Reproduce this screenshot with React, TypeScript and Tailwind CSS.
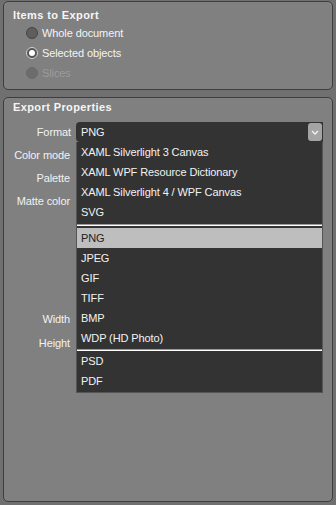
import React from "react";

const font = { fontFamily: '"Liberation Sans", Arial, sans-serif' };

const Radio = ({
  label,
  checked,
  disabled
}: {
  label: string;
  checked?: boolean;
  disabled?: boolean;
}) => (
  <div className="flex h-5 items-center pl-[22px]">
    <span
      className={
        "flex size-3 items-center justify-center rounded-full border " +
        (checked
          ? "border-[#d0d0d0] bg-[#555]"
          : disabled
            ? "border-[#6a6a6a] bg-[#6c6c6c]"
            : "border-[#444] bg-[#5e5e5e]")
      }
    >
      {checked && <span className="size-[6px] rounded-full bg-white" />}
    </span>
    <span
      className={
        "ml-1 text-[11px] tracking-[-0.1px] " +
        (disabled ? "text-[#9c9c9c]" : "text-[#f4f4f4]")
      }
    >
      {label}
    </span>
  </div>
);

const Label = ({ text, className }: { text: string; className?: string }) => (
  <div
    className={
      "flex h-5 w-[67px] items-center justify-end text-[11px] tracking-[-0.1px] text-[#f2f2f2] " +
      (className ?? "")
    }
  >
    {text}
  </div>
);

const groupA = [
  "XAML Silverlight 3 Canvas",
  "XAML WPF Resource Dictionary",
  "XAML Silverlight 4 / WPF Canvas",
  "SVG"
];
const groupB = ["PNG", "JPEG", "GIF", "TIFF", "BMP", "WDP (HD Photo)"];
const groupC = ["PSD", "PDF"];

const Item = ({ text }: { text: string }) => (
  <div
    className={
      "flex h-5 items-center pl-1 text-[11px] tracking-[-0.1px] " +
      (text === "PNG" ? "bg-[#bebebe] text-[#222]" : "text-[#f2f2f2]")
    }
  >
    {text}
  </div>
);

const Separator = ({ className }: { className?: string }) => (
  <div className={"flex flex-col justify-center " + (className ?? "")}>
    <div className="h-px bg-[#9a9a9a]" />
    <div className="h-px bg-white" />
  </div>
);

export default function App() {
  return (
    <div
      className="flex h-[505px] w-[336px] flex-col gap-[7px] bg-[#707070] px-[3px] pt-px pb-[3px]"
      style={font}
    >
      <div className="h-[89px] rounded-[5px] border border-[#3e3e3e] bg-[#808080]">
        <div className="pt-[5px] pl-[9px] text-[11px] font-bold leading-4 tracking-[0.4px] text-[#f6f6f6]">
          Items to Export
        </div>
        <Radio label="Whole document" />
        <Radio label="Selected objects" checked />
        <Radio label="Slices" disabled />
      </div>

      <div className="flex-1 rounded-[5px] border border-[#3e3e3e] bg-[#808080]">
        <div className="pt-px pl-[9px] text-[11px] font-bold leading-4 tracking-[0.4px] text-[#f6f6f6]">
          Export Properties
        </div>
        <div className="mt-[7px] flex items-center">
          <Label text="Format" />
          <div className="relative ml-[5px] w-[247px]">
            <div className="flex h-5 items-center rounded-l-[4px] bg-[#333] pr-px pl-[5px]">
              <span className="flex-1 text-[11px] tracking-[-0.1px] text-[#f2f2f2]">
                PNG
              </span>
              <span className="flex h-[18px] w-[14px] items-center justify-center rounded-[3px] bg-[#a4a4a4]">
                <svg width="8" height="5" viewBox="0 0 8 5">
                  <path d="M1 1 L4 4 L7 1" stroke="#f4f4f4" strokeWidth="1.3" fill="none" />
                </svg>
              </span>
            </div>
            <div className="absolute top-full left-0 z-10 w-[247px] border-x border-b border-[#555] bg-[#333] pb-px">
              {groupA.map((t) => (
                <Item key={t} text={t} />
              ))}
              <Separator className="h-[6px]" />
              {groupB.map((t) => (
                <Item key={t} text={t} />
              ))}
              <Separator className="h-[3px] justify-end" />
              {groupC.map((t) => (
                <Item key={t} text={t} />
              ))}
            </div>
          </div>
        </div>
        <div className="mt-[3px] flex flex-col gap-[3px]">
          <Label text="Color mode" className="pr-px" />
          <Label text="Palette" className="pr-px" />
          <Label text="Matte color" className="pr-px" />
          <Label text="Width" className="mt-[95px] pr-px" />
          <Label text="Height" className="mt-px pr-px" />
        </div>
      </div>
    </div>
  );
}
